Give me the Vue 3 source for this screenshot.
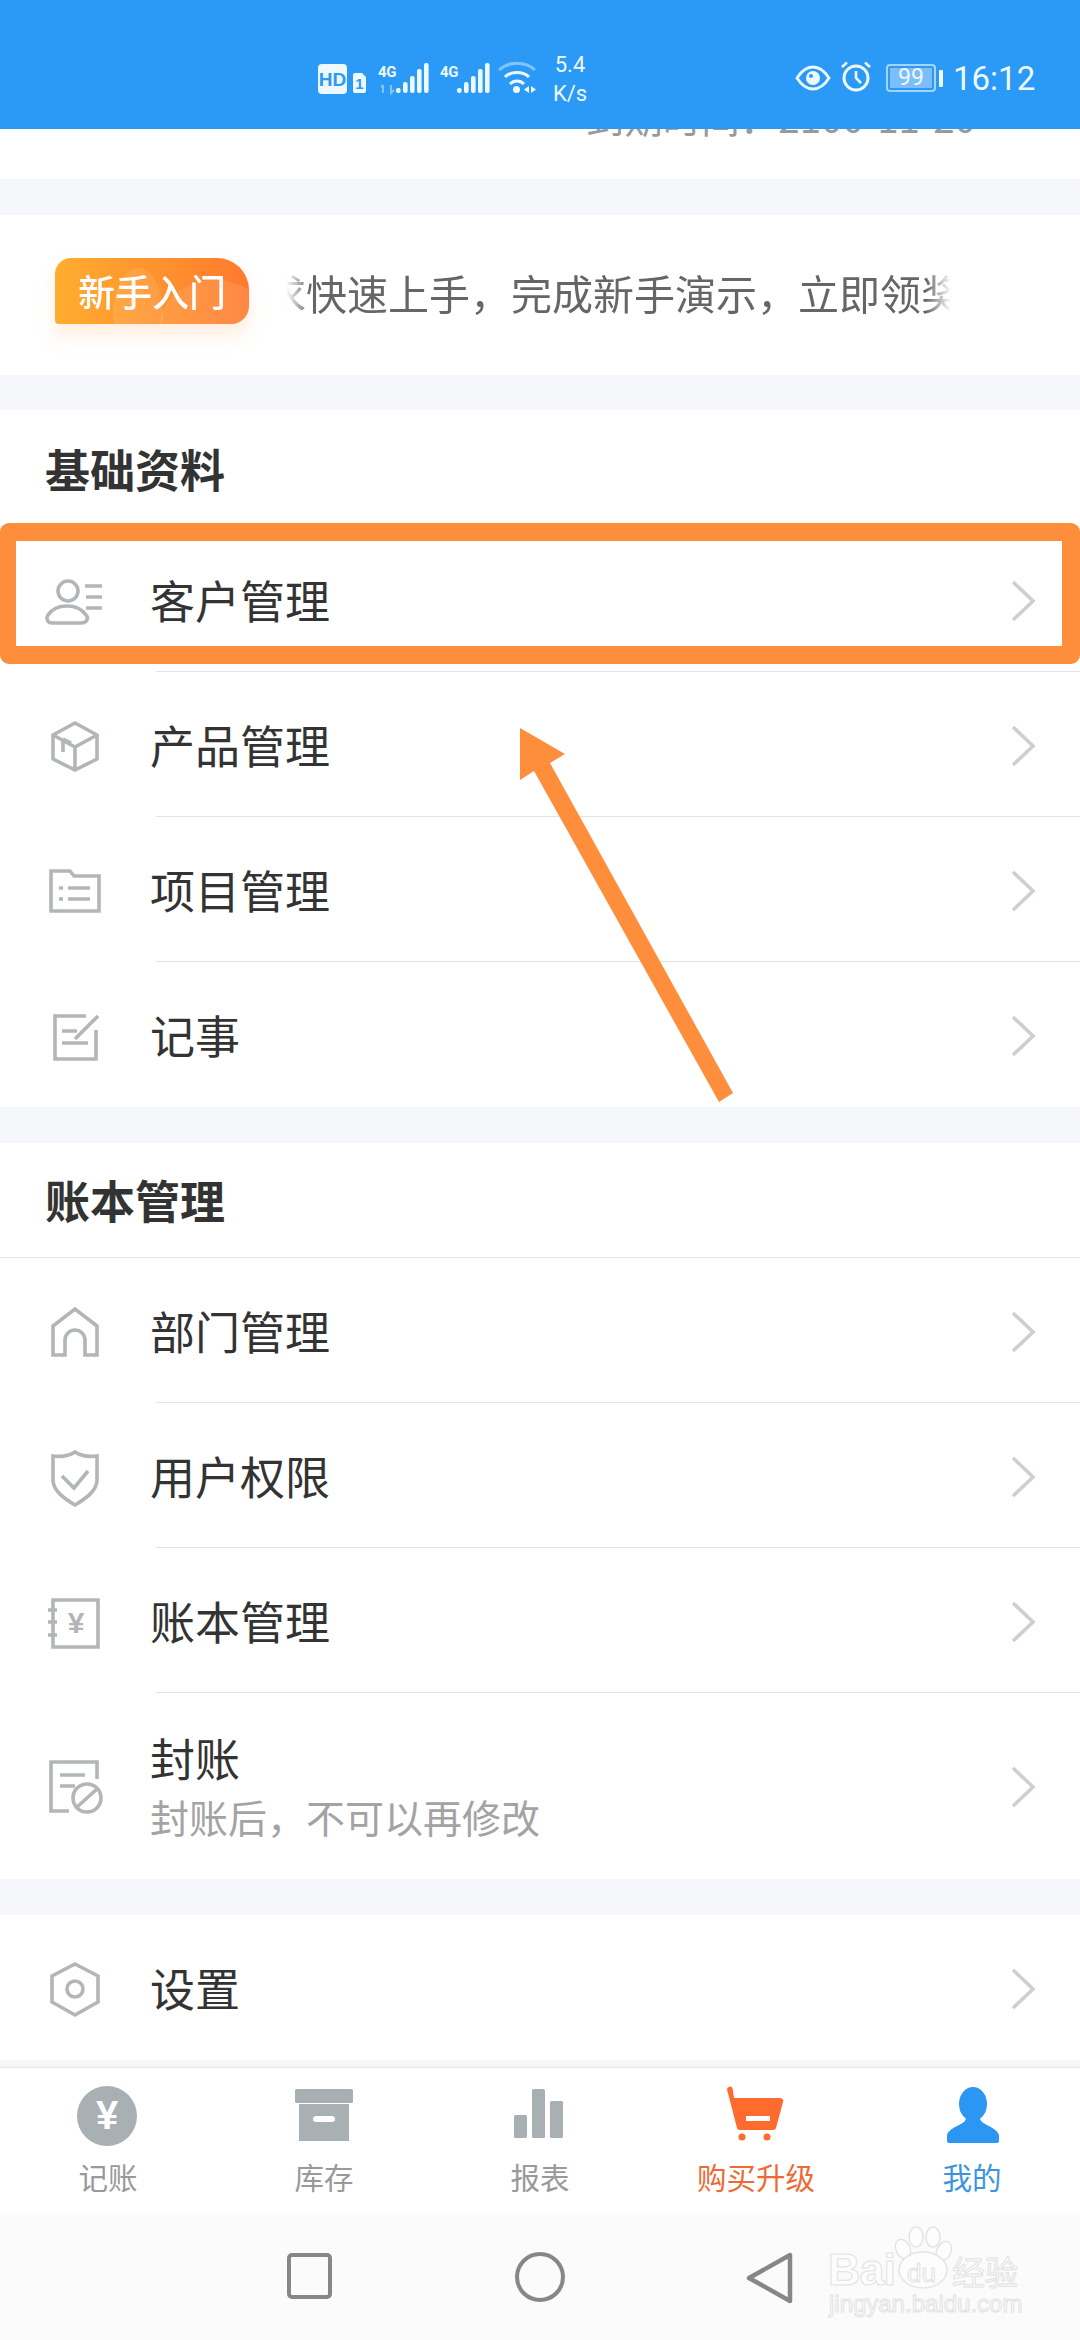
<script setup>
const c = (x, y, r) => `M${x - r} ${y}a${r} ${r} 0 1 0 ${2 * r} 0a${r} ${r} 0 1 0 ${-2 * r} 0`
const icons = {
  customer: c(23, 20, 10) + 'M7 52H36C42 52 44 47 41 44C37 38 30 35 22 35C14 35 7 38 3 44C1 47 2 52 7 52ZM40 15H57M41 26H57M41 37H57',
  box: 'M30 7L52 19V43L30 54L8 43V19ZM8 19L30 31L52 19M30 31V54M18 23V36M18 23L26 27',
  folder: 'M6 10H25L29 15H54V50H6ZM23 27H45M23 38H45M14 27H18M14 38H18',
  note: 'M41 10H10V53H51V24M17 25H32M17 37H43M30 33L53 10',
  home: 'M8 53V24L30 7L52 24V53H40V38A10 10 0 0 0 20 38V53Z',
  shield: 'M30 5C36 9 44 10 52 9V33C52 44 40 52 30 58C20 52 8 44 8 33V9C16 10 24 9 30 5ZM17 29L29 41L43 24',
  ledger: 'M8 8H53V55H8ZM3 18H12M3 30H12M3 43H12',
  closeout: 'M52 22V5H6V54H24M15 18H40M15 29H30' + c(42, 41, 14) + 'M32 50L52 32',
  settings: 'M30 5L53 17V43L30 56L7 43V17Z' + c(30, 30, 8)
}
const basic = [
  { name: '客户管理', icon: 'customer' },
  { name: '产品管理', icon: 'box' },
  { name: '项目管理', icon: 'folder' },
  { name: '记事', icon: 'note' }
]
const books = [
  { name: '部门管理', icon: 'home' },
  { name: '用户权限', icon: 'shield' },
  { name: '账本管理', icon: 'ledger', yen: true },
  { name: '封账', icon: 'closeout', sub: '封账后，不可以再修改' }
]
const settings = [{ name: '设置', icon: 'settings' }]
const sections = [
  { title: '基础资料', rows: basic },
  { title: '账本管理', rows: books },
  { rows: settings }
]
const bars = [[0, 5], [7, 11], [14, 17], [21, 24], [28, 30]]
const tabs = [
  { label: '记账', key: 'coin' },
  { label: '库存', key: 'store' },
  { label: '报表', key: 'chart' },
  { label: '购买升级', key: 'cart', cls: 'orange' },
  { label: '我的', key: 'me', cls: 'blue' }
]
</script>

<template>
  <div class="page">
    <header class="status">
      <svg class="sig" width="232" height="60" viewBox="316 50 232 60">
        <rect x="318" y="64" width="29" height="30" rx="4" fill="#eef8ff" />
        <text x="332.500" y="85.500" class="hd">HD</text>
        <path d="M353 75a2 2 0 0 1 2-2h7l4 4v14a2 2 0 0 1-2 2h-9a2 2 0 0 1-2-2z" fill="#eef8ff" />
        <text x="359.500" y="89" class="one">1</text>
        <text x="378" y="76.500" class="g4">4G</text>
        <text x="440" y="76.500" class="g4">4G</text>
        <path d="M383 85v8M381 87l2-2M391 85v8l3-3" stroke="#eef8ff" stroke-opacity=".45" stroke-width="2" fill="none" />
        <rect v-for="b in bars" :key="'a' + b[0]" :x="396 + b[0]" :y="93 - b[1]" width="4.600" :height="b[1]" rx="2" fill="#eef8ff" />
        <rect v-for="b in bars" :key="'b' + b[0]" :x="457 + b[0]" :y="93 - b[1]" width="4.600" :height="b[1]" rx="2" fill="#eef8ff" />
        <path d="M499 70C509 61 525 61 535 70" stroke="#eef8ff" stroke-opacity=".45" stroke-width="3" fill="none" />
        <path d="M505 77C511 71 523 71 529 77M510 84C514 80 520 80 524 84" stroke="#eef8ff" stroke-width="3" fill="none" />
        <circle cx="516.500" cy="89.500" r="3.500" fill="#eef8ff" />
        <path d="M529 86v7l-5-3.500zM531 86v7l5-3.500z" fill="#eef8ff" />
      </svg>
      <div class="speed"><span>5.4</span><span>K/s</span></div>
      <svg class="eye" width="36" height="28" viewBox="0 0 36 28">
        <path d="M2 14C7 6 12 3 18 3S29 6 34 14C29 22 24 25 18 25S7 22 2 14Z" fill="none" stroke="#eef8ff" stroke-width="2.800" />
        <circle cx="18" cy="14" r="7" fill="#eef8ff" />
        <circle cx="16" cy="12" r="2" fill="#2b9af7" />
      </svg>
      <svg class="alarm" width="32" height="32" viewBox="0 0 32 32">
        <circle cx="16" cy="18" r="12" fill="none" stroke="#eef8ff" stroke-width="3" />
        <path d="M16 11V18L21 23M2 7L7 2.500M30 7L25 2.500" fill="none" stroke="#eef8ff" stroke-width="2.600" />
      </svg>
      <div class="battery"><span class="level">99</span></div>
      <span class="nub"></span>
      <span class="time">16:12</span>
    </header>

    <main class="main">
      <div class="clipped"><span>到期时间：2100-11-20</span></div>
      <section class="banner">
        <div class="badge">
          <span class="blob one-blob"></span>
          <span class="blob two-blob"></span>
          <span class="badge-text">新手入门</span>
        </div>
        <div class="marquee"><span>求快速上手，完成新手演示，立即领奖</span></div>
      </section>

      <section v-for="(s, i) in sections" :key="i" class="card">
        <h2 v-if="s.title" class="title">{{ s.title }}</h2>
        <div v-for="(r, j) in s.rows" :key="r.name" class="row" :class="{ tall: r.sub, sep: j < s.rows.length - 1 }">
          <svg class="ico" width="60" height="60" viewBox="0 0 60 60">
            <path :d="icons[r.icon]" fill="none" stroke="#b2b6b8" stroke-width="3.600" />
            <text v-if="r.yen" x="31" y="41" class="yen">¥</text>
          </svg>
          <div class="label">
            <div class="name">{{ r.name }}</div>
            <div v-if="r.sub" class="sub">{{ r.sub }}</div>
          </div>
          <svg class="chev" width="26" height="42" viewBox="0 0 26 42">
            <path d="M2 2L22 21L2 40" fill="none" stroke="#cdcfd0" stroke-width="3.600" />
          </svg>
        </div>
      </section>
    </main>

    <nav class="tabs">
      <div v-for="t in tabs" :key="t.key" class="tab" :class="t.cls">
        <svg width="64" height="62" viewBox="0 0 64 62">
          <template v-if="t.key === 'coin'">
            <circle cx="31" cy="31" r="30" fill="#a8b0b4" />
            <text x="31" y="44" class="coin-yen">¥</text>
          </template>
          <template v-else-if="t.key === 'store'">
            <rect x="3" y="4" width="58" height="14" rx="1.500" fill="#a8b0b4" />
            <path d="M7 19H57V56H7ZM24 31a3 3 0 0 0 0 6H40a3 3 0 0 0 0-6Z" fill="#a8b0b4" fill-rule="evenodd" />
          </template>
          <template v-else-if="t.key === 'chart'">
            <rect x="6" y="30" width="13" height="23" rx="1.500" fill="#a8b0b4" />
            <rect x="24" y="4" width="13" height="49" rx="1.500" fill="#a8b0b4" />
            <rect x="42" y="16" width="13" height="37" rx="1.500" fill="#a8b0b4" />
          </template>
          <template v-else-if="t.key === 'cart'">
            <path d="M3 4.500A3 3 0 0 1 8.500 3L10 13H56A3 3 0 0 1 59 17L52 43A3 3 0 0 1 49 45H16A3 3 0 0 1 13 43ZM22 31V36H46V31Z" fill="#ff6a2f" fill-rule="evenodd" />
            <circle cx="18" cy="52" r="3.500" fill="#ff6a2f" />
            <circle cx="43" cy="52" r="3.500" fill="#ff6a2f" />
          </template>
          <template v-else>
            <ellipse cx="33" cy="19" rx="14" ry="17" fill="#2c96f3" />
            <path d="M26 33C26 40 10 41 7 50V56A2 2 0 0 0 9 58H57A2 2 0 0 0 59 56V50C56 41 40 40 40 33Z" fill="#2c96f3" />
          </template>
        </svg>
        <span class="tab-label">{{ t.label }}</span>
      </div>
    </nav>

    <footer class="sysnav">
      <svg width="50" height="50" viewBox="0 0 50 50">
        <rect x="4" y="4" width="41" height="42" rx="3" fill="none" stroke="#878787" stroke-width="4" />
      </svg>
      <svg width="52" height="52" viewBox="0 0 52 52">
        <circle cx="26" cy="26" r="23" fill="none" stroke="#878787" stroke-width="4" />
      </svg>
      <svg width="50" height="54" viewBox="0 0 50 54">
        <path d="M4 27L45 4V50Z" fill="none" stroke="#878787" stroke-width="4.500" stroke-linejoin="round" />
      </svg>
    </footer>

    <div class="highlight"></div>
    <svg class="arrow" width="240" height="390" viewBox="510 720 240 390">
      <path d="M520 728L565 754L550 763L733 1093L719 1102L534 771L520 780Z" fill="#ff8e3c" />
    </svg>
    <div class="mark">
      <svg class="paw" width="200" height="70" viewBox="828 2225 200 70">
        <g fill="#fdfdfd" stroke="#e4e4e4" stroke-width="1.500">
          <ellipse cx="916" cy="2237" rx="7" ry="10" />
          <ellipse cx="933" cy="2237" rx="7" ry="10" />
          <ellipse cx="903" cy="2249" rx="7" ry="10" transform="rotate(-25 903 2249)" />
          <ellipse cx="944" cy="2251" rx="7" ry="10" transform="rotate(25 944 2251)" />
          <ellipse cx="923" cy="2270" rx="24" ry="18" />
        </g>
      </svg>
      <span class="bai">Bai</span>
      <span class="du">du</span>
      <span class="jy">经验</span>
      <span class="url">jingyan.baidu.com</span>
    </div>
  </div>
</template>

<style scoped>
.page {
  position: relative;
  width: 1080px;
  height: 2340px;
  overflow: hidden;
  display: flex;
  flex-direction: column;
  background: #f5f7fa;
  font-family: "Noto Sans CJK SC", "Noto Sans", sans-serif;
}
.status {
  height: 129px;
  flex: none;
  background: #2b9af7;
  color: #eef8ff;
  display: flex;
  align-items: flex-start;
  padding-left: 316px;
  box-sizing: border-box;
  font-family: Roboto, sans-serif;
}
.sig { margin-top: 50px; flex: none; }
.hd { font: 700 19px "Liberation Sans", sans-serif; fill: #2b9af7; text-anchor: middle; }
.one { font: 700 15px "Liberation Sans", sans-serif; fill: #2b9af7; text-anchor: middle; }
.g4 { font: 700 15px "Roboto", sans-serif; fill: #eef8ff; letter-spacing: -0.300px; }
.speed {
  display: flex;
  flex-direction: column;
  align-items: center;
  width: 40px;
  margin: 50px 0 0 2px;
  font-size: 22px;
  line-height: 29px;
}
.eye { margin: 64px 0 0 205px; flex: none; }
.alarm { margin: 60px 0 0 9px; flex: none; }
.battery {
  width: 50px;
  height: 28px;
  margin: 64px 0 0 14px;
  box-sizing: border-box;
  border: 2px solid #a6d5fb;
  border-radius: 4px;
  padding: 2px;
  flex: none;
}
.level {
  display: block;
  height: 100%;
  background: #7cbefa;
  font-size: 23px;
  line-height: 20px;
  text-align: center;
}
.nub {
  width: 4px;
  height: 17px;
  margin: 70px 0 0 3px;
  background: #eef8ff;
  border-radius: 1px;
  flex: none;
}
.time {
  margin: 57px 0 0 10px;
  font-size: 33px;
  line-height: 44px;
}
.main { flex: 1; min-height: 0; display: flex; flex-direction: column; }
.clipped {
  height: 50px;
  flex: none;
  background: #fff;
  overflow: hidden;
  text-align: right;
  padding-right: 104px;
  margin-bottom: 36px;
}
.clipped span {
  display: block;
  margin-top: -38px;
  font-size: 38.500px;
  line-height: 50px;
  color: #999;
}
.banner {
  height: 160px;
  flex: none;
  box-sizing: border-box;
  background: #fff;
  display: flex;
  align-items: center;
  padding: 0 0 8px 55px;
  margin-bottom: 35px;
}
.badge {
  position: relative;
  width: 194px;
  height: 66px;
  overflow: hidden;
  border-radius: 16px 32px 18px 4px;
  background: linear-gradient(90deg, #ffad2f, #ff7a2e);
  display: flex;
  align-items: center;
  justify-content: center;
  filter: drop-shadow(0 12px 9px rgba(255, 150, 60, 0.16));
}
.badge-text { position: relative; color: #fff; font-size: 37px; font-weight: 500; line-height: 66px; }
.blob { position: absolute; border-radius: 50%; background: rgba(255, 255, 255, 0.1); }
.one-blob { width: 50px; height: 90px; left: 58px; top: 10px; }
.two-blob { width: 110px; height: 90px; left: 105px; top: 22px; }
.marquee {
  width: 665px;
  margin: 2px 0 0 37px;
  overflow: hidden;
  white-space: nowrap;
  font-size: 41px;
  line-height: 60px;
  color: #666;
  -webkit-mask-image: linear-gradient(90deg, transparent 0, #000 24px, #000 640px, transparent 665px);
  mask-image: linear-gradient(90deg, transparent 0, #000 24px, #000 640px, transparent 665px);
}
.marquee span { display: block; margin-left: -21px; }
.card { background: #fff; flex: none; margin-bottom: 36px; }
.card:nth-of-type(2) { padding-top: 2px; }
.title {
  margin: 0;
  height: 115px;
  box-sizing: border-box;
  padding: 0 0 0 45px;
  border-bottom: 1px solid #e6e6e6;
  font-size: 45px;
  font-weight: 700;
  line-height: 114px;
  color: #333;
}
.row {
  position: relative;
  height: 145px;
  display: flex;
  align-items: center;
  padding: 0 43px 0 45px;
}
.row.tall { height: 186px; }
.row.sep::after {
  content: "";
  position: absolute;
  left: 156px;
  right: 0;
  bottom: 0;
  height: 1px;
  background: #e3e3e3;
}
.ico { flex: none; margin-top: 2px; }
.yen { font-size: 30px; fill: #b2b6b8; text-anchor: middle; font-weight: 700; font-family: "Liberation Sans", sans-serif; }
.label { flex: 1; margin-left: 45px; }
.name { font-size: 45px; line-height: 60px; color: #333; }
.sub { font-size: 39px; line-height: 56px; color: #a3a3a3; }
.chev { flex: none; margin-top: 2px; }
.tabs {
  height: 146px;
  flex: none;
  box-sizing: border-box;
  border-top: 1px solid #e5e6ea;
  background: #fff;
  display: flex;
}
.tab {
  flex: 1;
  display: flex;
  flex-direction: column;
  align-items: center;
  padding-top: 17px;
  color: #999;
}
.tab svg { display: block; }
.tab-label { font-size: 29.500px; line-height: 44px; margin-top: 7px; }
.orange { color: #ee6a35; }
.blue { color: #3b94dc; }
.coin-yen { font-size: 40px; font-weight: 700; fill: #fff; text-anchor: middle; font-family: "Liberation Sans", sans-serif; }
.sysnav {
  height: 127px;
  flex: none;
  background: #fbfbfb;
  box-sizing: border-box;
  padding: 38px 0 0 285px;
  display: flex;
  align-items: flex-start;
  gap: 179px;
}
.highlight {
  position: absolute;
  left: 0;
  top: 523px;
  width: 1080px;
  height: 141px;
  box-sizing: border-box;
  border: 18px solid #ff8e3c;
  border-left-width: 16px;
  border-radius: 9px;
}
.arrow { position: absolute; left: 510px; top: 720px; }
.mark {
  position: absolute;
  left: 828px;
  top: 2225px;
  width: 200px;
  height: 95px;
  color: #fdfdfd;
  -webkit-text-stroke: 1px #e2e2e2;
  font-family: "Liberation Sans", sans-serif;
}
.paw { position: absolute; left: 0; top: 0; }
.bai { position: absolute; left: 0; top: 20px; font-size: 45px; line-height: 50px; font-weight: 700; letter-spacing: -1px; }
.du { position: absolute; left: 79px; top: 33px; font-size: 26px; line-height: 30px; }
.jy { position: absolute; left: 124px; top: 28px; font-size: 33px; line-height: 36px; font-family: "Noto Sans CJK SC", sans-serif; }
.url { position: absolute; left: 1px; top: 65px; font-size: 24px; line-height: 28px; white-space: nowrap; }
</style>
